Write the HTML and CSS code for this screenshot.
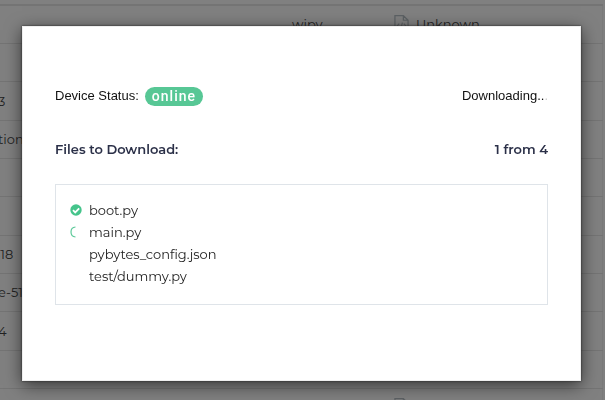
FILE: index.html
```html
<!DOCTYPE html>
<html lang="en">
<head>
<meta charset="utf-8">
<title>Files to Download</title>
<link rel="stylesheet" href="styles.css">
</head>
<body>
<svg class="sprite" aria-hidden="true">
  <symbol id="file-code" viewBox="0 0 16 20">
    <path d="M1 1h9l5 5v13H1zM10 1v5h5M5.500 9.500L3.500 12l2 2.500M10.500 9.500l2 2.500-2 2.500M9 8.500l-2 7" fill="none" stroke="currentColor" stroke-width="1.300"/>
  </symbol>
</svg>
<div class="page">
<table class="devices">
  <tbody>
    <tr><td></td><td>wipy</td><td><span class="firmware"><svg class="file-icon"><use href="#file-code"/></svg>Unknown</span></td></tr>
    <tr><td></td><td></td><td></td></tr>
    <tr><td>3</td><td></td><td></td></tr>
    <tr><td>tion</td><td></td><td></td></tr>
    <tr><td></td><td></td><td></td></tr>
    <tr><td></td><td></td><td></td></tr>
    <tr><td><span class="scrolled">818</span></td><td></td><td></td></tr>
    <tr><td>e-51</td><td></td><td></td></tr>
    <tr><td>4</td><td></td><td></td></tr>
    <tr><td></td><td></td><td></td></tr>
    <tr><td></td><td></td><td><span class="firmware"><svg class="file-icon"><use href="#file-code"/></svg></span></td></tr>
  </tbody>
</table>
</div>
<div class="backdrop">
  <section class="modal" role="dialog" aria-modal="true" aria-labelledby="title">
    <div class="bar status">
      <div class="device">Device Status: <span class="badge">online</span></div>
      <div>Downloading..<span class="dot">.</span></div>
    </div>
    <div class="bar heading">
      <h2 id="title">Files to Download:</h2>
      <strong>1 from 4</strong>
    </div>
    <ul class="files">
      <li>
        <svg class="state" viewBox="0 0 12 12"><circle cx="6" cy="6" r="5.700" fill="#45c48b"/><path d="M3 6.200l2.200 2.200L9.200 4.400" fill="none" stroke="#fff" stroke-width="1.800"/></svg>
        boot.py
      </li>
      <li>
        <svg class="state" viewBox="0 0 12 12"><path d="M5.500 1C-.5 1.500-.5 10.500 5.500 11" fill="none" stroke="#5cc999" stroke-width="1.200"/></svg>
        main.py
      </li>
      <li><span class="state"></span>pybytes_config.json</li>
      <li><span class="state"></span>test/dummy.py</li>
    </ul>
  </section>
</div>
</body>
</html>
```
FILE: styles.css
```css
* {
  box-sizing: border-box;
}

body {
  margin: 0;
  background: #808080;
  color: #222;
  font: 13px/22px Montserrat, Inter, sans-serif;
}

.sprite {
  position: absolute;
  width: 0;
  height: 0;
}

/* Device list behind the dialog */
.page {
  height: 100vh;
  padding-top: 4px;
  overflow: hidden;
}

.devices {
  width: 100%;
  margin-left: -2px;
  border-collapse: collapse;
  table-layout: fixed;
  border-top: 2px solid #747474;
  border-right: 1px solid #7a7a7a;
}

.devices tr {
  height: 38px;
}

.devices tr:nth-child(3n) {
  height: 39px;
}

.devices td {
  padding: 0;
  border-bottom: 1px solid #747474;
  white-space: nowrap;
}

.devices td:first-child {
  width: 294px;
}

.devices td:nth-child(2) {
  width: 102px;
}

.scrolled {
  margin-left: -6px;
}

.firmware {
  display: flex;
  align-items: center;
  gap: 7px;
}

.file-icon {
  width: 15px;
  height: 20px;
  color: #5c6164;
}

/* Download dialog */
.backdrop {
  position: fixed;
  inset: 0;
  padding: 26px 24px 0 22px;
}

.modal {
  padding: 59px 32px 75px;
  border: 1px solid #eee;
  background: #fff;
  box-shadow: 0 0 2px #222, 0 4px 16px rgba(0, 0, 0, .6);
}

.bar {
  display: flex;
  justify-content: space-between;
  align-items: center;
}

.status {
  font: 13px/20px "Liberation Sans", sans-serif;
  color: #111;
}

.device {
  display: flex;
  align-items: center;
  gap: 6px;
}

.badge {
  padding: 0 7px;
  border-radius: 10px;
  background: #57c795;
  color: #fff;
  font: 500 14px/19px Roboto, sans-serif;
  letter-spacing: 1px;
}

.dot {
  color: #ccc;
}

.heading {
  margin: 32px 0 24px;
  color: #2b3048;
}

.heading h2,
.heading strong {
  margin: 0;
  font-size: 13px;
  font-weight: 600;
}

.files {
  margin: 0;
  padding: 14px 14px 17px;
  border: 1px solid #dfe4e9;
  list-style: none;
}

.files li {
  display: flex;
  align-items: center;
  gap: 7px;
}

.state {
  width: 12px;
  height: 12px;
}
```
